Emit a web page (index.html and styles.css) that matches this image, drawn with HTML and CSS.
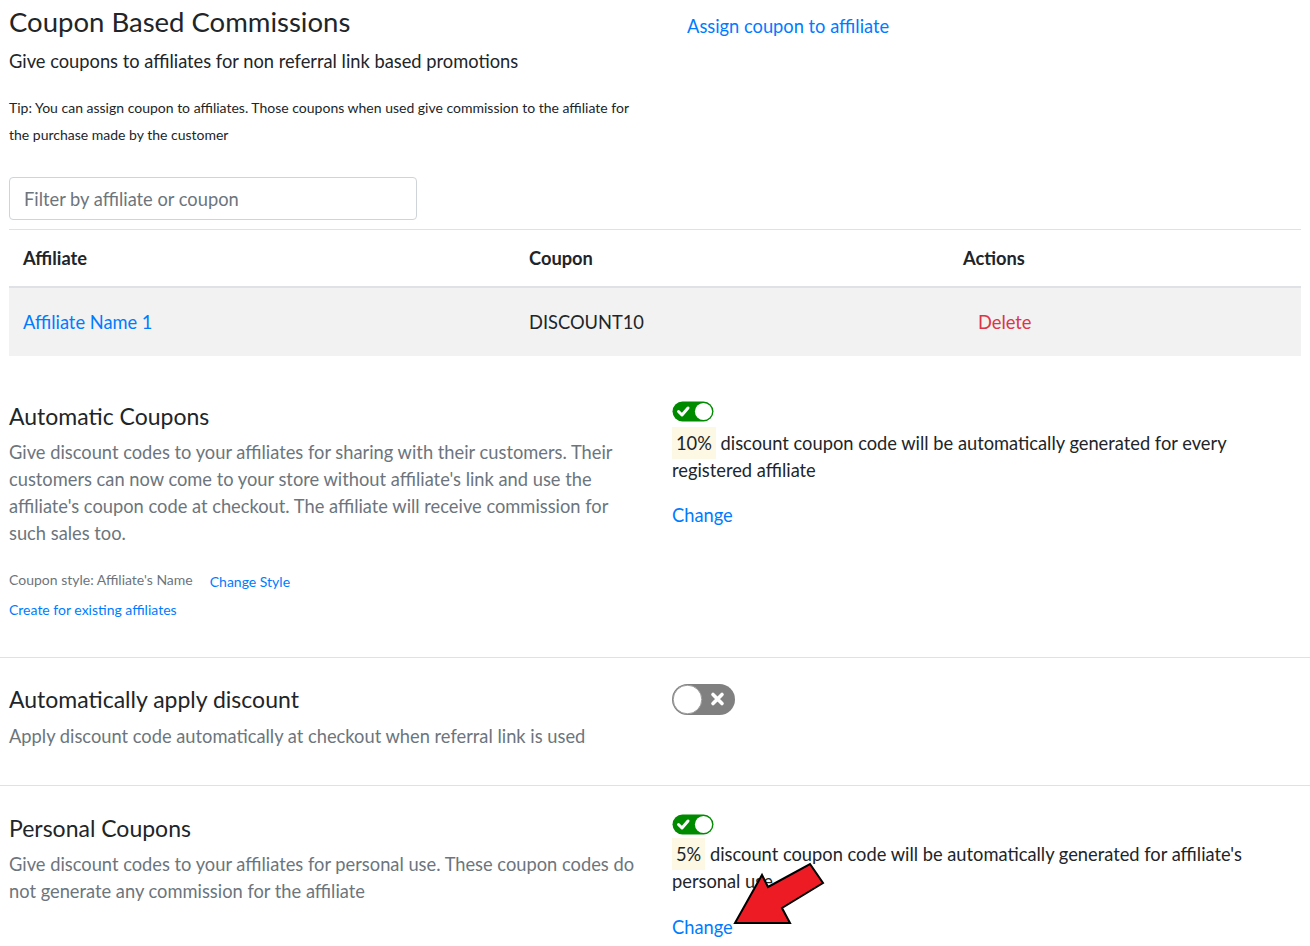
FILE: index.html
```html
<!DOCTYPE html>
<html>
<head>
<meta charset="utf-8">
<link rel="stylesheet" href="styles.css">
</head>
<body>
<div class="page">
  <section class="intro">
    <div class="cols">
      <div class="col">
        <h1 class="title">Coupon Based Commissions</h1>
        <p class="subtitle">Give coupons to affiliates for non referral link based promotions</p>
        <p class="tip">Tip: You can assign coupon to affiliates. Those coupons when used give commission to the affiliate for the purchase made by the customer</p>
      </div>
      <div class="col">
        <a class="assign-link" href="#">Assign coupon to affiliate</a>
      </div>
    </div>
    <input class="filter" type="text" placeholder="Filter by affiliate or coupon">
    <table class="coupons">
      <thead>
        <tr><th class="c1">Affiliate</th><th class="c2">Coupon</th><th class="c3">Actions</th></tr>
      </thead>
      <tbody>
        <tr><td class="c1"><a href="#">Affiliate Name 1</a></td><td class="c2">DISCOUNT10</td><td class="c3"><a class="delete" href="#">Delete</a></td></tr>
      </tbody>
    </table>
  </section>

  <section class="setting auto">
    <div class="cols">
      <div class="col">
        <h2 class="heading">Automatic Coupons</h2>
        <p class="desc">Give discount codes to your affiliates for sharing with their customers. Their customers can now come to your store without affiliate's link and use the affiliate's coupon code at checkout. The affiliate will receive commission for such sales too.</p>
        <div class="style-row"><span class="style-label">Coupon style: Affiliate's Name</span><a class="small-link style-change" href="#">Change Style</a></div>
        <a class="small-link create" href="#">Create for existing affiliates</a>
      </div>
      <div class="col">
        <svg class="toggle-on" width="42" height="21" viewBox="0 0 42 21">
          <rect x="0.5" y="0.5" width="41" height="20" rx="10" fill="#008a00"/>
          <circle cx="31.5" cy="10.5" r="8.6" fill="#fff"/>
          <path d="M6.5 10.5 L10 14 L16 7" fill="none" stroke="#fff" stroke-width="3" stroke-linecap="round" stroke-linejoin="round"/>
        </svg>
        <p class="info"><mark class="pct">10%</mark> discount coupon code will be automatically generated for every registered affiliate</p>
        <a class="change" href="#">Change</a>
      </div>
    </div>
  </section>

  <section class="setting apply">
    <div class="cols">
      <div class="col">
        <h2 class="heading">Automatically apply discount</h2>
        <p class="desc">Apply discount code automatically at checkout when referral link is used</p>
      </div>
      <div class="col">
        <svg class="toggle-off" width="63" height="31" viewBox="0 0 63 31">
          <rect x="0" y="0" width="63" height="31" rx="15.5" fill="#808080"/>
          <circle cx="15.5" cy="15.5" r="14.3" fill="#fff" stroke="#9a9a9a" stroke-width="1"/>
          <path d="M41 10.5 L50 19.5 M50 10.5 L41 19.5" stroke="#fff" stroke-width="3.6" stroke-linecap="round"/>
        </svg>
      </div>
    </div>
  </section>

  <section class="setting personal">
    <div class="cols">
      <div class="col">
        <h2 class="heading">Personal Coupons</h2>
        <p class="desc">Give discount codes to your affiliates for personal use. These coupon codes do not generate any commission for the affiliate</p>
      </div>
      <div class="col">
        <svg class="toggle-on" width="42" height="21" viewBox="0 0 42 21">
          <rect x="0.5" y="0.5" width="41" height="20" rx="10" fill="#008a00"/>
          <circle cx="31.5" cy="10.5" r="8.6" fill="#fff"/>
          <path d="M6.5 10.5 L10 14 L16 7" fill="none" stroke="#fff" stroke-width="3" stroke-linecap="round" stroke-linejoin="round"/>
        </svg>
        <p class="info"><mark class="pct">5%</mark> discount coupon code will be automatically generated for affiliate's personal use</p>
        <a class="change" href="#">Change</a>
      </div>
    </div>
  </section>

  <svg class="arrow" width="1310" height="946" viewBox="0 0 1310 946">
    <polygon points="735,923 762,875 768,887 810,864 823,883 782,908 790,923" fill="#ed1c24" stroke="#000" stroke-width="2" stroke-linejoin="miter"/>
  </svg>
</div>
</body>
</html>
```

FILE: styles.css
```css
* { box-sizing: border-box; }
html, body { margin: 0; padding: 0; background: #fff; }
body {
  font-family: Lato, "Open Sans", sans-serif;
  color: #212529;
  font-size: 18.3px;
  line-height: 27px;
  width: 1310px;
  height: 946px;
  overflow: hidden;
}
.page { position: relative; }
a { color: #007bff; text-decoration: none; }
p { margin: 0; }
h1, h2 { margin: 0; font-weight: 400; }

.cols {
  display: grid;
  grid-template-columns: 629px 1fr;
  column-gap: 34px;
}

.intro { padding: 0 9px; }
.title { font-size: 27.5px; line-height: 44px; }
.subtitle { font-size: 18.3px; line-height: 34px; }
.tip { font-size: 14px; line-height: 27px; margin-top: 16px; }
.assign-link { display: inline-block; margin: 13px 0 0 15px; line-height: 27px; }

.filter {
  display: block;
  margin-top: 29px;
  width: 408px;
  height: 43px;
  border: 1px solid #ced4da;
  border-radius: 4px;
  padding: 0 14px;
  font-family: inherit;
  font-size: 18.3px;
  color: #495057;
}
.filter::placeholder { color: #6c757d; }

.coupons {
  margin-top: 9px;
  width: 100%;
  border-collapse: collapse;
}
.coupons th, .coupons td { text-align: left; padding: 0 14px; }
.coupons th {
  font-weight: 700;
  height: 57px;
  padding-top: 1px;
  border-top: 1px solid #dee2e6;
  border-bottom: 2px solid #dee2e6;
}
.coupons td { height: 69px; padding-top: 2px; background: #f2f2f2; }
.coupons .c1 { width: 506px; }
.coupons .c2 { width: 434px; }
.coupons td.c3 { padding-left: 29px; }
.delete { color: #dc3545; }

.setting { padding: 0 9px; }
.auto { padding-top: 43px; padding-bottom: 34px; border-bottom: 1px solid #dee2e6; }
.apply { padding-top: 24px; padding-bottom: 35px; border-bottom: 1px solid #dee2e6; }
.personal { padding-top: 25px; }

.heading { font-size: 23px; line-height: 34px; }
.desc { color: #6c757d; line-height: 27px; margin-top: 6px; }
.apply .desc { margin-top: 7px; }
.style-row { margin-top: 19px; font-size: 14px; line-height: 27px; }
.style-label { color: #6c757d; }
.style-change { margin-left: 17px; position: relative; top: 2px; }
.small-link { font-size: 14px; line-height: 27px; }
.setting .col > .create { display: block; margin-top: 3px; }

.toggle-on, .toggle-off { display: block; }
.auto .toggle-on { margin-top: 2px; }
.personal .toggle-on { margin-top: 3px; }
.apply .toggle-off { margin-top: 2px; }
.info { margin-top: 8px; }
.personal .info { margin-top: 6px; }
.pct { background: #fcf8e3; color: #212529; padding: 5px 4px; }
.change { display: inline-block; margin-top: 18px; }
.personal .change { margin-top: 19px; }

.arrow { position: absolute; left: 0; top: 0; pointer-events: none; }
```
